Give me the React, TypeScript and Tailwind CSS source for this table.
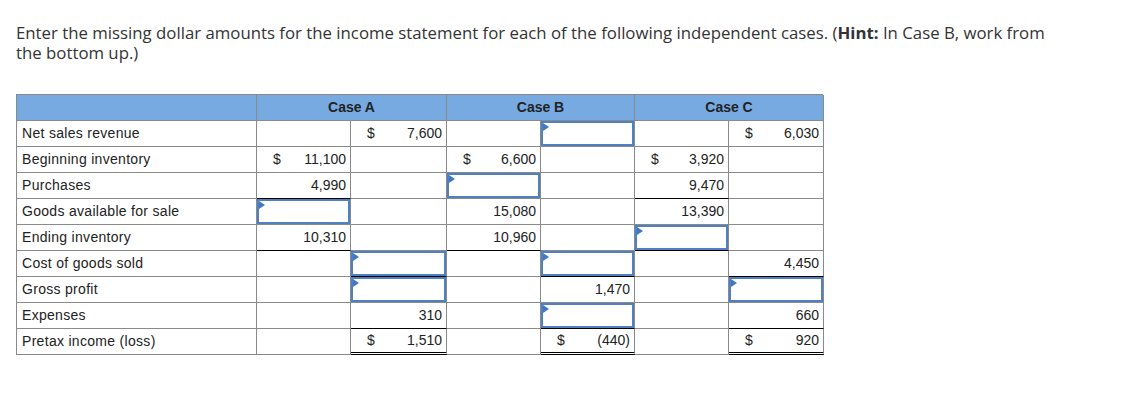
type Cell = {
  v?: string
  d?: boolean
  input?: boolean
  ul?: boolean
  dbl?: boolean
}

type Row = { label: string; cells: Cell[] }

const e: Cell = {}

const ROWS: Row[] = [
  { label: 'Net sales revenue', cells: [e, { d: true, v: '7,600' }, e, { input: true }, e, { d: true, v: '6,030' }] },
  { label: 'Beginning inventory', cells: [{ d: true, v: '11,100' }, e, { d: true, v: '6,600' }, e, { d: true, v: '3,920' }, e] },
  { label: 'Purchases', cells: [{ v: '4,990', ul: true }, e, { input: true }, e, { v: '9,470', ul: true }, e] },
  { label: 'Goods available for sale', cells: [{ input: true }, e, { v: '15,080' }, e, { v: '13,390' }, e] },
  { label: 'Ending inventory', cells: [{ v: '10,310', ul: true }, e, { v: '10,960', ul: true }, e, { input: true, ul: true }, e] },
  { label: 'Cost of goods sold', cells: [e, { input: true, ul: true }, e, { input: true, ul: true }, e, { v: '4,450', ul: true }] },
  { label: 'Gross profit', cells: [e, { input: true }, e, { v: '1,470' }, e, { input: true }] },
  { label: 'Expenses', cells: [e, { v: '310', ul: true }, e, { input: true, ul: true }, e, { v: '660', ul: true }] },
  { label: 'Pretax income (loss)', cells: [e, { d: true, v: '1,510', dbl: true }, e, { d: true, v: '(440)', dbl: true }, e, { d: true, v: '920', dbl: true }] },
]

const WIDTHS = ['w-[94px]', 'w-[96px]', 'w-[94px]', 'w-[94px]', 'w-[94px]', 'w-[95px]']

function DataCell({ cell, w }: { cell: Cell; w: string }) {
  const bottom = cell.dbl
    ? 'border-b-[3px] border-double border-b-black'
    : cell.ul
      ? 'border-b border-b-black'
      : 'border-b border-b-[#8a8a8a]'
  return (
    <div className={`${w} h-[26px] shrink-0 border-r border-r-[#8a8a8a] ${bottom}`}>
      {cell.input ? (
        <div className="relative h-full w-full border-2 border-[#4f80c2] bg-white">
          <span className="absolute left-0 top-0 h-0 w-0 border-y-[4px] border-l-[6px] border-y-transparent border-l-[#3f78c8]" />
        </div>
      ) : (
        <div className="flex h-full items-center justify-between pl-4 pr-[4px]">
          <span>{cell.d ? '$' : ''}</span>
          <span>{cell.v ?? ''}</span>
        </div>
      )}
    </div>
  )
}

export default function App() {
  return (
    <div className="min-h-[407px] w-[1132px] bg-white pt-[23px] text-[#222]" style={{ fontFamily: '"Liberation Sans", Arial, sans-serif' }}>
      <p
        className="w-[1060px] pl-[16px] text-[16.8px] leading-[20px] text-[#333]"
        style={{ fontFamily: '"Open Sans", "Liberation Sans", sans-serif' }}
      >
        Enter the missing dollar amounts for the income statement for each of the following independent cases. (
        <b>Hint:</b> In Case B, work from the bottom up.)
      </p>

      <div className="ml-[16px] mt-[31px] w-[807px] border-l border-t border-[#8a8a8a] text-[14px]">
        <div className="flex h-[26px] bg-[#78aae2] font-bold text-[#222]">
          <div className="w-[240px] shrink-0 border-b border-r border-[#8a8a8a]" />
          {['Case A', 'Case B', 'Case C'].map((c, i) => (
            <div
              key={c}
              className={`${i === 0 ? 'w-[190px]' : i === 1 ? 'w-[188px]' : 'w-[189px]'} flex shrink-0 items-center justify-center border-b border-r border-[#8a8a8a]`}
            >
              {c}
            </div>
          ))}
        </div>
        {ROWS.map((r) => (
          <div key={r.label} className="flex">
            <div className="flex h-[26px] w-[240px] shrink-0 items-center border-b border-r border-[#8a8a8a] pl-[5px] tracking-[0.3px]">
              {r.label}
            </div>
            {r.cells.map((c, i) => (
              <DataCell key={i} cell={c} w={WIDTHS[i]} />
            ))}
          </div>
        ))}
      </div>
    </div>
  )
}
